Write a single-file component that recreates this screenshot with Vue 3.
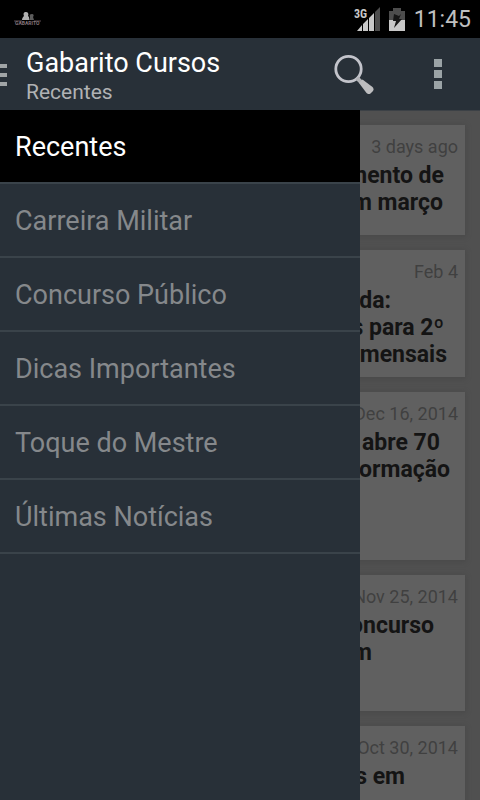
<script setup>
import { ref } from 'vue'

const categories = [
  'Recentes',
  'Carreira Militar',
  'Concurso Público',
  'Dicas Importantes',
  'Toque do Mestre',
  'Últimas Notícias',
]
const selected = ref('Recentes')

// "inset" is the free space after the last word of each headline line
const posts = [
  { date: '3 days ago', height: 110, lines: [{ text: 'mento de', inset: 21 }, { text: 'm março', inset: 22 }] },
  { date: 'Feb 4', height: 127, lines: [{ text: 'da:', inset: 74 }, { text: 's para 2º', inset: 21 }, { text: 'mensais', inset: 18 }] },
  { date: 'Dec 16, 2014', height: 168, lines: [{ text: 'abre 70', inset: 25 }, { text: 'ormação', inset: 15 }] },
  { date: 'Nov 25, 2014', height: 136, lines: [{ text: 'oncurso', inset: 31 }, { text: 'm', inset: 93 }] },
  { date: 'Oct 30, 2014', height: 136, lines: [{ text: 's em', inset: 60 }] },
]
</script>

<template>
  <div class="screen">
    <div class="status">
      <svg class="brand" width="28" height="16" viewBox="0 0 28 16" aria-hidden="true">
        <path d="M8 9 C8 7 9 6 10 5 C9 2 10 1 12 1 C14 1 15 3 14 5 L15 6 L15 9Z" fill="#b0b0b0" />
        <path d="M15 9 L16 6 C15 4 16 3 18 3 C20 3 20 5 19 6 L20 9Z" fill="#5c5c5c" />
        <path d="M0 10 H8 M20 10 H27" stroke="#5c4c52" stroke-width="1" />
        <text x="1" y="14" class="brand-name">GABARITO</text>
      </svg>
      <div class="system">
        <svg width="26" height="25" viewBox="0 0 26 25" role="img" aria-label="3G">
          <path d="M26 0 V24 H21 V5Z" fill="#4d4d4d" />
          <path d="M20 6 V24 H15 V11Z M14 12 V24 H9 V17Z M8 18 V24 H3Z" fill="#c8c8c8" />
          <text x="0" y="11" class="network">3G</text>
        </svg>
        <svg width="16" height="25" viewBox="0 0 16 25" role="img" aria-label="Bateria">
          <path d="M4 1 H12 V4 H16 V13 H0 V4 H4Z" fill="#4d4d4d" />
          <path d="M0 13 H16 V24 H0Z" fill="#c8c8c8" />
          <path d="M5 7 L10 9 L12 7 L10 12 H13 L5 21 L7 14 H4Z" fill="#161616" />
        </svg>
        <time class="clock">11:45</time>
      </div>
    </div>

    <header class="bar">
      <button class="toggle" aria-label="Menu"><i></i><i></i><i></i></button>
      <div class="heading">
        <h1>Gabarito Cursos</h1>
        <p>Recentes</p>
      </div>
      <button class="action" aria-label="Buscar">
        <svg width="40" height="40" viewBox="0 0 40 40">
          <circle cx="14.5" cy="15" r="12.7" fill="none" stroke="#c3c4cb" stroke-width="2.8" />
          <path d="M23 24 L27 28" stroke="#b0b1b5" stroke-width="4" />
          <path d="M25 29 L28.5 25.5 L38.5 33 Q40.5 35 38.5 37.5 L36.5 39.5 Q34.5 41 32.5 39Z" fill="#bdbdbf" />
        </svg>
      </button>
      <button class="action more" aria-label="Mais opções"><i></i><i></i><i></i></button>
    </header>

    <main class="content">
      <section class="feed">
        <article v-for="post in posts" :key="post.date" class="card" :style="{ minHeight: post.height + 'px' }">
          <time class="date">{{ post.date }}</time>
          <h2>
            <span v-for="line in post.lines" :key="line.text" :style="{ paddingRight: line.inset + 'px' }">{{ line.text }}</span>
          </h2>
        </article>
      </section>
      <nav class="drawer">
        <button
          v-for="name in categories"
          :key="name"
          :class="{ active: name === selected }"
          @click="selected = name"
        >{{ name }}</button>
      </nav>
    </main>
  </div>
</template>

<style>
body {
  margin: 0;
  background: #505050;
}
</style>

<style scoped>
* {
  box-sizing: border-box;
}
.screen {
  display: flex;
  flex-direction: column;
  height: 100vh;
  overflow: hidden;
  font-family: Roboto, sans-serif;
}
button {
  border: 0;
  padding: 0;
  background: none;
  font: inherit;
}
h1, h2, p {
  margin: 0;
  font-weight: 400;
}
.status {
  display: flex;
  flex: none;
  align-items: center;
  justify-content: space-between;
  height: 38px;
  padding: 0 9px 0 14px;
  background: #000;
}
.brand-name {
  font: 700 5px Roboto, sans-serif;
  fill: #84747a;
}
.system {
  display: flex;
  align-items: center;
  gap: 9px;
}
.network {
  font: 700 12px "Roboto Condensed", Roboto, sans-serif;
  fill: #c8c8c8;
  stroke: #000;
  stroke-width: 2px;
  paint-order: stroke;
}
.clock {
  padding-top: 2px;
  font-size: 23px;
  line-height: 36px;
  color: #c0c0c0;
}
.bar {
  display: flex;
  flex: none;
  align-items: center;
  height: 72px;
  background: #283038;
}
.toggle {
  display: flex;
  flex-direction: column;
  gap: 5px;
  width: 26px;
  padding-top: 2px;
}
.toggle i {
  width: 7px;
  height: 4px;
  background: #a0a4a6;
}
.heading {
  flex: 1;
  padding-top: 3px;
}
.heading h1 {
  font-size: 27px;
  line-height: 32px;
  color: #fff;
}
.heading p {
  font-size: 21px;
  line-height: 26px;
  color: #b0b2b4;
}
.action {
  display: flex;
  align-items: center;
  justify-content: center;
  width: 84px;
  height: 72px;
}
.more {
  flex-direction: column;
  gap: 3px;
}
.more i {
  width: 8px;
  height: 8px;
  background: #9ba3a6;
}
.content {
  position: relative;
  flex: 1;
  min-height: 0;
  overflow: hidden;
  background: #505050;
}
.feed {
  display: flex;
  flex-direction: column;
  gap: 15px;
  padding: 14px 15px 15px;
  border-top: 1px solid #3c4146;
}
.card {
  flex: none;
  padding-top: 11px;
  background: #606060;
  box-shadow: 0 1px 4px 1px #4a4a4a;
  text-align: right;
}
.date {
  display: block;
  padding-right: 7px;
  font-size: 18px;
  line-height: 22px;
  color: #404040;
}
h2 {
  padding-top: 4px;
  font-size: 23px;
  font-weight: 700;
  line-height: 27px;
  color: #141414;
}
h2 span {
  display: block;
  white-space: nowrap;
}
.drawer {
  position: absolute;
  top: 0;
  bottom: 0;
  left: 0;
  display: flex;
  flex-direction: column;
  width: 75%;
  background: #283038;
}
.drawer button {
  height: 74px;
  padding: 2px 15px 0;
  border-bottom: 2px solid #3a434a;
  font-size: 27px;
  text-align: left;
  color: #85888b;
}
.drawer .active {
  background: #000;
  color: #fff;
}
</style>
